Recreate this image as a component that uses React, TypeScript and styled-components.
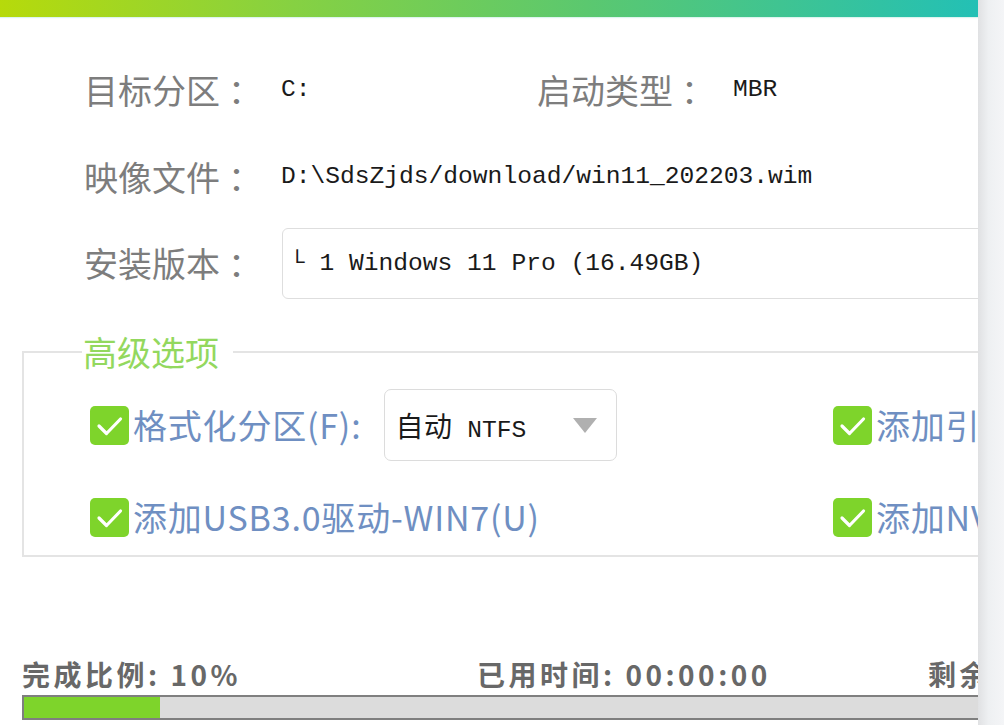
import React from 'react'
import styled, { createGlobalStyle } from 'styled-components'

const GlobalStyle = createGlobalStyle`
  html, body {
    margin: 0;
    padding: 0;
    background: #fff;
  }
  body {
    font-family: "Noto Sans CJK SC", "Noto Sans", sans-serif;
  }
`

type CheckProps = { label: string }

const CheckItem = (props: CheckProps) => (
  <CheckWrap>
    <svg width="39" height="39" viewBox="0 0 39 39">
      <rect x="0" y="0" width="39" height="39" rx="5" fill="#7ed42b" />
      <path d="M9 20 L16.5 27.5 L30.5 13" stroke="#fff" strokeWidth="3.2" fill="none" strokeLinecap="round" strokeLinejoin="round" />
    </svg>
    <CheckLabel>{props.label}</CheckLabel>
  </CheckWrap>
)

type LabelProps = { text: string }

const FieldLabel = (props: LabelProps) => (
  <Label>
    {props.text}
    <Colon>：</Colon>
  </Label>
)

const App = () => {
  const progress = 10

  return (
    <>
      <GlobalStyle />
      <Page>
        <Main>
          <TopBar />
          <Form>
            <InfoRow>
              <FieldLabel text="目标分区" />
              <Value>C:</Value>
              <FieldLabel text="启动类型" />
              <Value>MBR</Value>
            </InfoRow>
            <InfoRow>
              <FieldLabel text="映像文件" />
              <Value wide>D:\SdsZjds/download/win11_202203.wim</Value>
            </InfoRow>
            <InfoRow short>
              <FieldLabel text="安装版本" />
              <VersionSelect>└ 1 Windows 11 Pro (16.49GB)</VersionSelect>
            </InfoRow>
          </Form>

          <Options>
            <Legend>高级选项</Legend>
            <OptRow>
              <OptCell>
                <CheckItem label="格式化分区(F):" />
                <Dropdown>
                  <DropText><Cjk>自动</Cjk> NTFS</DropText>
                  <svg width="24" height="15" viewBox="0 0 24 15">
                    <polygon points="0,0 24,0 12,15" fill="#b0b0b0" />
                  </svg>
                </Dropdown>
              </OptCell>
              <CheckItem label="添加引导修复" />
            </OptRow>
            <OptRow second>
              <CheckItem label="添加USB3.0驱动-WIN7(U)" />
              <CheckItem label="添加NVMe驱动" />
            </OptRow>
          </Options>

          <Status>
            <StatusText>完成比例: {progress}%</StatusText>
            <StatusText>已用时间: 00:00:00</StatusText>
            <StatusText>剩余时间: 00:00:00</StatusText>
          </Status>
          <Progress>
            <ProgressFill style={{ width: `${progress}%` }} />
          </Progress>
        </Main>
        <ScrollStrip />
      </Page>
    </>
  )
}

export default App

const Page = styled.div`
  display: flex;
  width: 100vw;
  height: 100vh;
  overflow: hidden;
`
const Main = styled.div`
  flex: 0 0 978px;
  width: 978px;
  overflow: hidden;
  background: #fff;
`
const ScrollStrip = styled.div`
  flex: 1;
  background: linear-gradient(90deg, #e0e1e3 0%, #eef0f2 40%, #f4f5f7 100%);
`
const TopBar = styled.div`
  height: 17px;
  background: linear-gradient(90deg, #b6da0b 0%, #86d142 30%, #5bc86f 60%, #23c0b5 100%);
  box-shadow: 0 1px 1px rgba(120, 210, 190, 0.25);
`
const Form = styled.div`
  padding: 29px 0 0 84px;
`
const InfoRow = styled.div<{ short?: boolean }>`
  display: grid;
  grid-template-columns: 197px 256px 196px auto;
  align-items: center;
  height: ${p => (p.short ? '86px' : '87px')};
`
const Label = styled.div`
  font-size: 34px;
  line-height: 40px;
  color: #7d7d7d;
  white-space: nowrap;
`
const Colon = styled.span`
  margin-left: 8px;
`
const Value = styled.div<{ wide?: boolean }>`
  font-family: "Liberation Mono", "DejaVu Sans Mono", monospace;
  font-size: 24.6px;
  line-height: 30px;
  color: #1a1a1a;
  white-space: nowrap;
  grid-column: ${p => (p.wide ? '2 / -1' : 'auto')};
`
const VersionSelect = styled.div`
  grid-column: 2 / -1;
  margin-left: 1px;
  width: 760px;
  height: 71px;
  box-sizing: border-box;
  border: 1.5px solid #dedede;
  border-radius: 6px;
  display: flex;
  align-items: center;
  padding-left: 7px;
  font-family: "Liberation Mono", "DejaVu Sans Mono", monospace;
  font-size: 24.6px;
  color: #1a1a1a;
  white-space: nowrap;
`
const Options = styled.div`
  margin: 45px 0 0 22px;
  width: 1100px;
  border: 2px solid #e4e4e4;
  padding-bottom: 2px;
`
const Legend = styled.div`
  width: fit-content;
  margin: -21px 0 0 58px;
  padding: 0 14px 0 1px;
  background: #fff;
  font-size: 34px;
  line-height: 40px;
  color: #93d85e;
`
const OptRow = styled.div<{ second?: boolean }>`
  display: grid;
  grid-template-columns: 743px auto;
  align-items: center;
  height: 72px;
  padding-left: 66px;
  margin-top: ${p => (p.second ? '20px' : '17px')};
`
const OptCell = styled.div`
  display: flex;
  align-items: center;
`
const CheckWrap = styled.div`
  display: flex;
  align-items: center;
  gap: 4px;
  white-space: nowrap;
  & svg {
    flex: 0 0 auto;
  }
`
const CheckLabel = styled.span`
  font-size: 34px;
  line-height: 40px;
  letter-spacing: 0.8px;
  color: #6f8fc2;
`
const Dropdown = styled.div`
  margin-left: 23px;
  width: 233px;
  height: 72px;
  box-sizing: border-box;
  border: 1.5px solid #dcdcdc;
  border-radius: 7px;
  display: flex;
  align-items: center;
  justify-content: space-between;
  padding: 0 19px 0 10px;
`
const DropText = styled.span`
  font-family: "Liberation Mono", "DejaVu Sans Mono", monospace;
  font-size: 24.6px;
  color: #1a1a1a;
  white-space: nowrap;
`
const Cjk = styled.span`
  font-family: "Noto Sans CJK SC", sans-serif;
  font-size: 28px;
  letter-spacing: 0.5px;
`
const Status = styled.div`
  display: grid;
  grid-template-columns: 455px 451px auto;
  align-items: center;
  margin-top: 99px;
  padding-left: 22px;
  height: 36px;
`
const StatusText = styled.div`
  font-size: 28px;
  line-height: 36px;
  font-weight: 700;
  letter-spacing: 3.5px;
  color: #686868;
  white-space: nowrap;
`
const Progress = styled.div`
  margin: 3px 0 0 22px;
  width: 1360px;
  height: 25px;
  box-sizing: border-box;
  border: 2px solid #7f7f7f;
  background: #dcdcdc;
`
const ProgressFill = styled.div`
  height: 100%;
  background: #7ed42b;
`
